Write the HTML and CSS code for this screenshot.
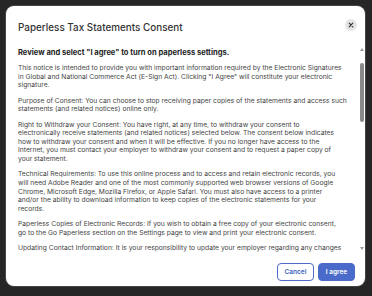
FILE: index.html
```html
<!DOCTYPE html>
<html lang="en">
<head>
    <meta charset="UTF-8">
    <meta name="viewport" content="width=device-width, initial-scale=1.0">
    <title>Paperless Tax Statements Consent</title>
    <link rel="stylesheet" href="styles.css">
</head>
<body>
    <div class="modal">
        <div class="modal-header">
            <h1>Paperless Tax Statements Consent</h1>
            <button class="close-btn" aria-label="Close">
                <svg width="6" height="6" viewBox="0 0 6 6"><path d="M1.2 1.2L4.8 4.8M4.8 1.2L1.2 4.8" stroke="#333" stroke-width="1.2" stroke-linecap="round"/></svg>
            </button>
        </div>
        <div class="modal-content">
            <div class="modal-body">
                <h2>Review and select "I agree" to turn on paperless settings.</h2>
                <p>This notice is intended to provide you with important information required by the Electronic Signatures<br>in Global and National Commerce Act (E-Sign Act). Clicking "I Agree" will constitute your electronic<br>signature.</p>
                <p>Purpose of Consent: You can choose to stop receiving paper copies of the statements and access such<br>statements (and related notices) online only.</p>
                <p>Right to Withdraw your Consent: You have right, at any time, to withdraw your consent to<br>electronically receive statements (and related notices) selected below. The consent below indicates<br>how to withdraw your consent and when it will be effective. If you no longer have access to the<br>Internet, you must contact your employer to withdraw your consent and to request a paper copy of<br>your statement.</p>
                <p>Technical Requirements: To use this online process and to access and retain electronic records, you<br>will need Adobe Reader and one of the most commonly supported web browser versions of Google<br>Chrome, Microsoft Edge, Mozilla Firefox, or Apple Safari. You must also have access to a printer<br>and/or the ability to download information to keep copies of the electronic statements for your<br>records.</p>
                <p>Paperless Copies of Electronic Records: If you wish to obtain a free copy of your electronic consent,<br>go to the Go Paperless section on the Settings page to view and print your electronic consent.</p>
                <p>Updating Contact Information: It is your responsibility to update your employer regarding any changes<br>to your email address or mailing address so that you continue to receive notices about your electronic statements.</p>
                <p>Delivery of Statements: Once you consent, your statements will be posted online and you will receive an email notification when a new statement is available to view. Statements will remain available online for the period required by law.</p>
                <p>Duration of Consent: Your consent will remain in effect until you withdraw it. Withdrawing your consent will take effect for statements issued after the withdrawal has been processed by your employer.</p>
                <p>Paper Copies: You may request a paper copy of any statement at no charge by contacting your employer. Requesting a paper copy does not by itself withdraw your consent to receive statements electronically.</p>
                <p>Changes to Requirements: If the hardware or software requirements change in a way that creates a material risk that you will not be able to access your statements, you will be notified and given the option to withdraw your consent.</p>
                <p>Communications in Writing: All statements and notices provided to you electronically will be considered "in writing" and will have the same effect as if they had been delivered to you on paper.</p>
                <p>Consent: By selecting "I agree" you confirm that you have read this notice, that you can access and print the information described above, and that you consent to receive your statements electronically.</p>
            </div>
            <div class="scroll-rail">
                <span class="arrow-up"></span>
                <span class="thumb"></span>
                <span class="arrow-down"></span>
            </div>
        </div>
        <div class="modal-footer">
            <button class="btn btn-secondary">Cancel</button>
            <button class="btn btn-primary">I agree</button>
        </div>
    </div>
</body>
</html>
```

FILE: styles.css
```css
body {
    font-family: Inter, "Liberation Sans", Arial, sans-serif;
    background-color: #262626;
    margin: 0;
    padding: 6px 7px 10px 6px;
}
.modal {
    background-color: #fff;
    border-radius: 8px;
    height: 280px;
    display: flex;
    flex-direction: column;
    box-shadow: 0 0 0 1px rgba(255, 255, 255, 0.15);
}
.modal-header {
    display: flex;
    justify-content: space-between;
    align-items: flex-start;
    padding: 14px 8px 12px 12px;
}
.modal-header h1 {
    margin: 0;
    font-size: 9.9px;
    line-height: 14px;
    font-weight: 500;
    color: #333;
}
.close-btn {
    width: 12px;
    height: 12px;
    margin-top: -1px;
    padding: 0;
    border: none;
    border-radius: 50%;
    background-color: #e6e6e6;
    display: flex;
    align-items: center;
    justify-content: center;
    cursor: pointer;
}
.modal-content {
    flex: 1;
    min-height: 0;
    display: flex;
    margin-right: 1px;
}
.modal-body {
    flex: 1;
    overflow-y: auto;
    scrollbar-width: none;
    padding: 2px 8px 6px 12px;
    color: #444;
    font-size: 6.72px;
    line-height: 8.6px;
}
.modal-body h2 {
    margin: 0 0 6px;
    font-size: 7.55px;
    line-height: 10px;
    font-weight: 700;
    color: #222;
}
.modal-body p {
    margin: 0 0 6.8px;
}
.scroll-rail {
    width: 4px;
    display: flex;
    flex-direction: column;
    align-items: center;
    padding: 2px 0 3px;
}
.arrow-up,
.arrow-down {
    width: 0;
    height: 0;
    border-left: 2px solid transparent;
    border-right: 2px solid transparent;
}
.arrow-up {
    border-bottom: 3px solid #9a9a9a;
}
.arrow-down {
    margin-top: auto;
    border-top: 3px solid #9a9a9a;
}
.thumb {
    width: 4px;
    height: 59px;
    margin-top: 12px;
    border-radius: 2px;
    background-color: #8a8a8a;
}
.modal-footer {
    display: flex;
    justify-content: flex-end;
    gap: 4px;
    padding: 10px 10px 5px;
}
.btn {
    height: 18px;
    padding: 0;
    border-radius: 4px;
    font-family: inherit;
    font-size: 6.5px;
    font-weight: 600;
    cursor: pointer;
}
.btn-secondary {
    width: 37px;
    background-color: #fff;
    color: #3d5fbf;
    border: 1px solid #4b6cc8;
}
.btn-primary {
    width: 37px;
    background-color: #4a6bc9;
    color: #fff;
    border: 1px solid #4a6bc9;
}
```
